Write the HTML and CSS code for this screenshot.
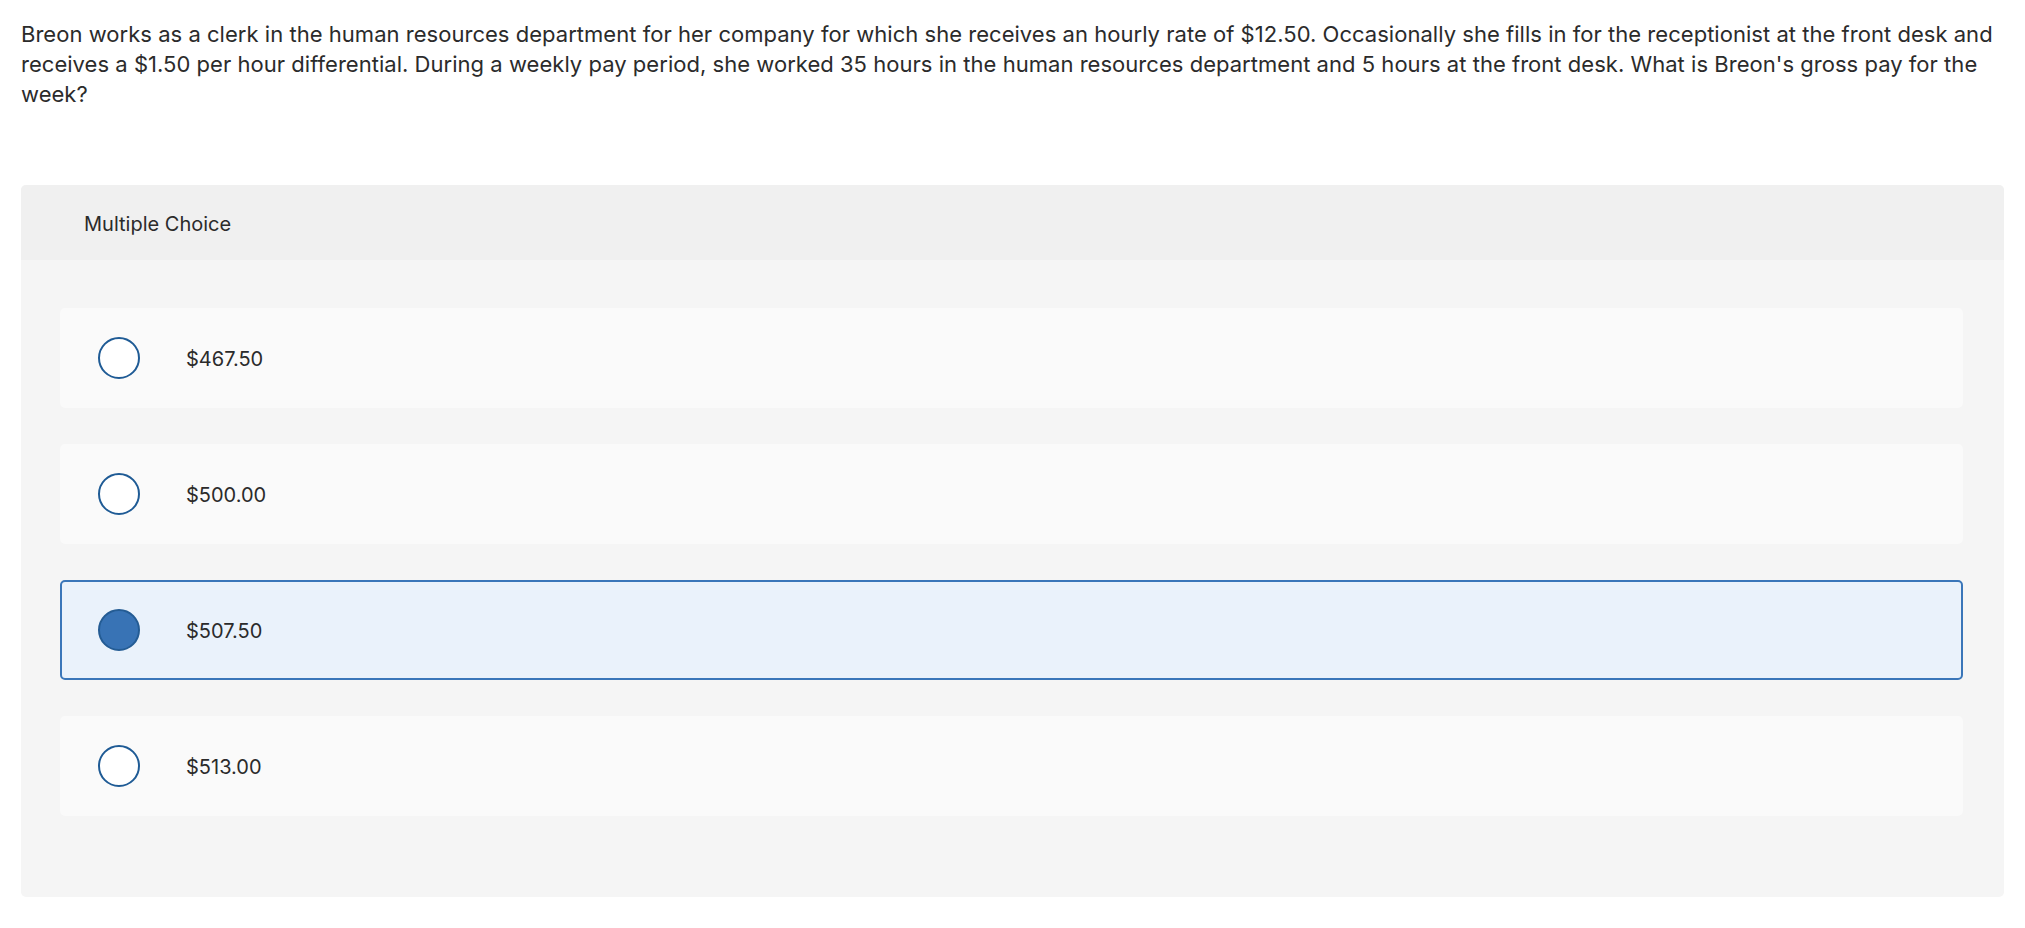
FILE: index.html
```html
<!DOCTYPE html>
<html lang="en">
<head>
<meta charset="utf-8">
<title>Multiple Choice</title>
<link rel="stylesheet" href="styles.css">
</head>
<body>
<main class="page">
  <p class="question">Breon works as a clerk in the human resources department for her company for which she receives an hourly rate of $12.50. Occasionally she fills in for the receptionist at the front desk and receives a $1.50 per hour differential. During a weekly pay period, she worked 35 hours in the human resources department and 5 hours at the front desk. What is Breon's gross pay for the week?</p>

  <section class="mc">
    <header class="mc-header">Multiple Choice</header>
    <div class="mc-body">
      <label class="option">
        <span class="radio"></span>
        <span class="option-text">$467.50</span>
      </label>
      <label class="option">
        <span class="radio"></span>
        <span class="option-text">$500.00</span>
      </label>
      <label class="option option--selected">
        <span class="radio radio--checked"></span>
        <span class="option-text">$507.50</span>
      </label>
      <label class="option">
        <span class="radio"></span>
        <span class="option-text">$513.00</span>
      </label>
    </div>
  </section>
</main>
</body>
</html>
```
FILE: styles.css
```css
* { box-sizing: border-box; }

html, body {
  margin: 0;
  background: #ffffff;
}

body {
  font-family: Inter, "Noto Sans", sans-serif;
  color: #2b2b2b;
}

.page {
  padding: 19px 21px 0 21px;
}

.question {
  margin: 0;
  font-size: 22px;
  line-height: 30px;
  letter-spacing: 0.03px;
}

.mc {
  margin-top: 76px;
  background: #f5f5f5;
  border-radius: 5px;
  overflow: hidden;
}

.mc-header {
  height: 75px;
  display: flex;
  align-items: center;
  padding-left: 63px;
  background: #f0f0f0;
  font-size: 20px;
  padding-top: 2px;
}

.mc-body {
  display: flex;
  flex-direction: column;
  gap: 36px;
  padding: 48px 41px 81px 39px;
}

.option {
  height: 100px;
  display: flex;
  align-items: center;
  padding-left: 38px;
  background: #fafafa;
  border-radius: 5px;
  border: 2px solid transparent;
  padding-top: 1px;
}

.option--selected {
  background: #eaf2fb;
  border-color: #3a76b9;
}

.radio {
  width: 42px;
  height: 42px;
  border-radius: 50%;
  border: 2px solid #1f5b95;
  background: #ffffff;
  flex: none;
  margin-left: -2px;
  margin-top: -1px;
}

.radio--checked {
  background: #3873b5;
  border-color: #245c94;
}

.option-text {
  margin-left: 46px;
  font-size: 20px;
}
```
